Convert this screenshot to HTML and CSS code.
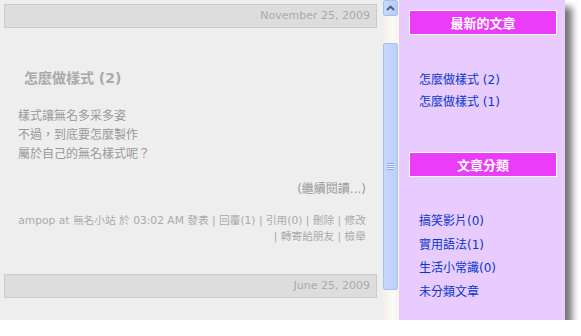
FILE: index.html
```html
<!DOCTYPE html>
<html lang="zh-Hant">
<head>
    <meta charset="UTF-8">
    <title>無名小站</title>
    <link rel="stylesheet" href="styles.css">
</head>
<body>
    <div class="window">
        <div class="main">
            <div class="date-bar">November 25, 2009</div>
            <div class="post">
                <h2 class="post-title">怎麼做樣式 (2)</h2>
                <div class="post-body">
                    樣式讓無名多采多姿<br>
                    不過，到底要怎麼製作<br>
                    屬於自己的無名樣式呢？
                </div>
                <div class="read-more">(繼續閱讀...)</div>
                <div class="post-footer">
                    ampop at 無名小站 於 03:02 AM 發表 | 回覆(1) | 引用(0) | 刪除 | 修改<br>
                    | 轉寄給朋友 | 檢舉
                </div>
            </div>
            <div class="date-bar">June 25, 2009</div>
        </div>

        <div class="scrollbar">
            <div class="scroll-btn">
                <svg width="9" height="6" viewBox="0 0 9 6"><path d="M1 5 L4.5 1.5 L8 5" fill="none" stroke="#4a5d80" stroke-width="1.8"/></svg>
            </div>
            <div class="scroll-thumb">
                <span class="grip"></span>
            </div>
        </div>

        <div class="sidebar">
            <div class="side-title">最新的文章</div>
            <ul class="side-list recent">
                <li><a href="#">怎麼做樣式 (2)</a></li>
                <li><a href="#">怎麼做樣式 (1)</a></li>
            </ul>
            <div class="side-title">文章分類</div>
            <ul class="side-list cats">
                <li><a href="#">搞笑影片(0)</a></li>
                <li><a href="#">實用語法(1)</a></li>
                <li><a href="#">生活小常識(0)</a></li>
                <li><a href="#">未分類文章</a></li>
            </ul>
        </div>
    </div>
</body>
</html>
```

FILE: styles.css
```css
body {
    margin: 0;
    padding: 0;
    background-color: #ffffff;
    font-family: "DejaVu Sans", "Noto Sans CJK TC", sans-serif;
}
.window {
    display: flex;
    width: 565px;
    height: 320px;
    overflow: hidden;
    box-shadow: 7px 7px 7px rgba(0, 0, 0, 0.55);
}
.main {
    width: 383px;
    flex: none;
    box-sizing: border-box;
    padding: 4px 6px 0 4px;
    background-color: #eeeeee;
}
.date-bar {
    height: 22px;
    line-height: 22px;
    border: 1px solid #cbcbcb;
    background-color: #dddddd;
    color: #aaaaaa;
    font-size: 11px;
    text-align: right;
    padding-right: 6px;
}
.post {
    padding: 0 11px 0 14px;
}
.post-title {
    margin: 40px 0 0 6px;
    font-size: 14px;
    line-height: 20px;
    color: #aaaaaa;
    font-family: "DejaVu Sans", "Noto Sans CJK TC", sans-serif;
}
.post-body {
    margin-top: 17px;
    font-family: "Noto Sans CJK TC", sans-serif;
    font-size: 12px;
    line-height: 19px;
    color: #999999;
}
.read-more {
    margin-top: 18px;
    text-align: right;
    font-size: 12px;
    line-height: 19px;
    color: #999999;
}
.post-footer {
    margin-top: 14px;
    margin-bottom: 29px;
    text-align: right;
    font-size: 10.7px;
    line-height: 16px;
    color: #aaaaaa;
    white-space: nowrap;
}
.scrollbar {
    width: 16px;
    flex: none;
    display: flex;
    flex-direction: column;
    align-items: flex-start;
    background: linear-gradient(to right, #f1efe6, #fbfbf7 60%, #f6f5ee);
}
.scroll-btn {
    width: 13px;
    height: 14px;
    border: 1px solid #a9bff0;
    border-radius: 2px;
    background: linear-gradient(to right, #c9d9fd, #b7cbfa);
    display: flex;
    align-items: center;
    justify-content: center;
}
.scroll-thumb {
    width: 13px;
    height: 245px;
    margin-top: 27px;
    border: 1px solid #a9c0f3;
    border-radius: 2px;
    background: linear-gradient(to right, #c7d7fd, #bccffb);
    display: flex;
    align-items: center;
    justify-content: center;
}
.grip {
    width: 7px;
    height: 7px;
    background: repeating-linear-gradient(to bottom, #8ea8e6 0, #8ea8e6 1px, #e6edff 1px, #e6edff 2px);
}
.sidebar {
    flex: 1;
    padding: 10px 8px 0 10px;
    background-color: #e8ccff;
}
.side-title {
    height: 23px;
    line-height: 23px;
    border: 1px solid #ffffff;
    background-color: #e93df8;
    color: #ffffff;
    font-family: "Noto Sans CJK TC", sans-serif;
    font-size: 13px;
    font-weight: bold;
    text-align: center;
}
.side-list {
    list-style: none;
    margin: 0;
    padding: 0 0 0 10px;
    font-size: 12px;
}
.side-list a {
    color: #0a36c8;
    text-decoration: none;
}
.recent {
    margin-top: 34px;
    margin-bottom: 39px;
}
.recent li {
    line-height: 22px;
}
.cats {
    margin-top: 33px;
}
.cats li {
    line-height: 23.5px;
}
```
